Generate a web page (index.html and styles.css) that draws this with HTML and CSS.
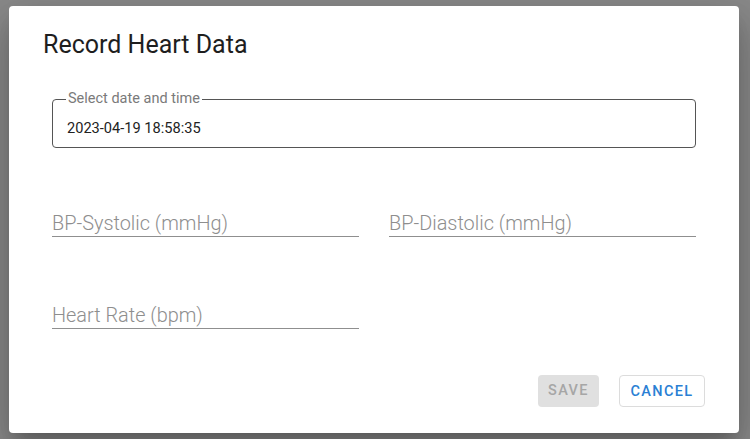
FILE: index.html
```html
<!DOCTYPE html>
<html>
<head>
<meta charset="utf-8">
<link rel="stylesheet" href="styles.css">
</head>
<body>
<div class="backdrop">
  <div class="dialog">
    <h2 class="title">Record Heart Data</h2>
    <div class="content">
      <fieldset class="outlined">
        <legend class="legend">Select date and time</legend>
        <div class="value">2023-04-19 18:58:35</div>
      </fieldset>
      <div class="grid">
        <div class="field"><span class="placeholder">BP-Systolic (mmHg)</span></div>
        <div class="field"><span class="placeholder">BP-Diastolic (mmHg)</span></div>
        <div class="field"><span class="placeholder">Heart Rate (bpm)</span></div>
      </div>
    </div>
    <div class="actions">
      <button class="btn btn-save" disabled>SAVE</button>
      <button class="btn btn-cancel">CANCEL</button>
    </div>
  </div>
</div>
</body>
</html>
```
FILE: styles.css
```css
html, body {
  margin: 0;
  padding: 0;
  height: 100%;
}
body {
  background: #8a8a8a;
  font-family: Roboto, "Liberation Sans", sans-serif;
  overflow: hidden;
}
.backdrop {
  padding: 6px 0 0 9px;
}
.dialog {
  width: 730px;
  height: 427px;
  box-sizing: border-box;
  background: #fff;
  border-radius: 4px;
  display: flex;
  flex-direction: column;
  box-shadow: 0 11px 15px -7px rgba(0,0,0,0.2), 0 24px 38px 3px rgba(0,0,0,0.14), 0 9px 46px 8px rgba(0,0,0,0.12);
}
.title {
  margin: 0;
  padding: 22px 34px 0;
  font-size: 25px;
  font-weight: 400;
  line-height: 34px;
  color: #1e1e1e;
}
.content {
  padding: 0 43px;
  flex: 1;
}
.outlined {
  margin: 29px 0 0;
  padding: 0 14px;
  height: 57px;
  box-sizing: border-box;
  border: 1.5px solid #555;
  border-radius: 4px;
}
.legend {
  font-size: 14.5px;
  color: #7a7a7a;
  padding: 0 2px;
  margin-left: -1px;
  line-height: 16px;
}
.value {
  font-size: 14.6px;
  line-height: 20px;
  color: #222;
  margin-top: 11px;
}
.grid {
  display: grid;
  grid-template-columns: 307px 307px;
  column-gap: 30px;
  row-gap: 67px;
  margin-top: 64px;
}
.field {
  height: 24px;
  border-bottom: 1px solid #8f8f8f;
}
.placeholder {
  font-size: 19.9px;
  font-weight: 300;
  line-height: 24px;
  color: #8e8e8e;
  display: block;
}
.actions {
  display: flex;
  justify-content: flex-end;
  gap: 20px;
  padding: 0 34px 26px;
}
.btn {
  font-family: Roboto, "Liberation Sans", sans-serif;
  font-size: 14.5px;
  font-weight: 500;
  letter-spacing: 1.35px;
  height: 32px;
  border-radius: 4px;
  padding: 0 10px;
  line-height: 32px;
  cursor: pointer;
}
.btn-save {
  background: #e0e0e0;
  color: #a6a6a6;
  border: none;
  width: 61px;
}
.btn-cancel {
  background: #fff;
  color: #2a7fd4;
  border: 1px solid #dcdcdc;
  width: 86px;
}
```
